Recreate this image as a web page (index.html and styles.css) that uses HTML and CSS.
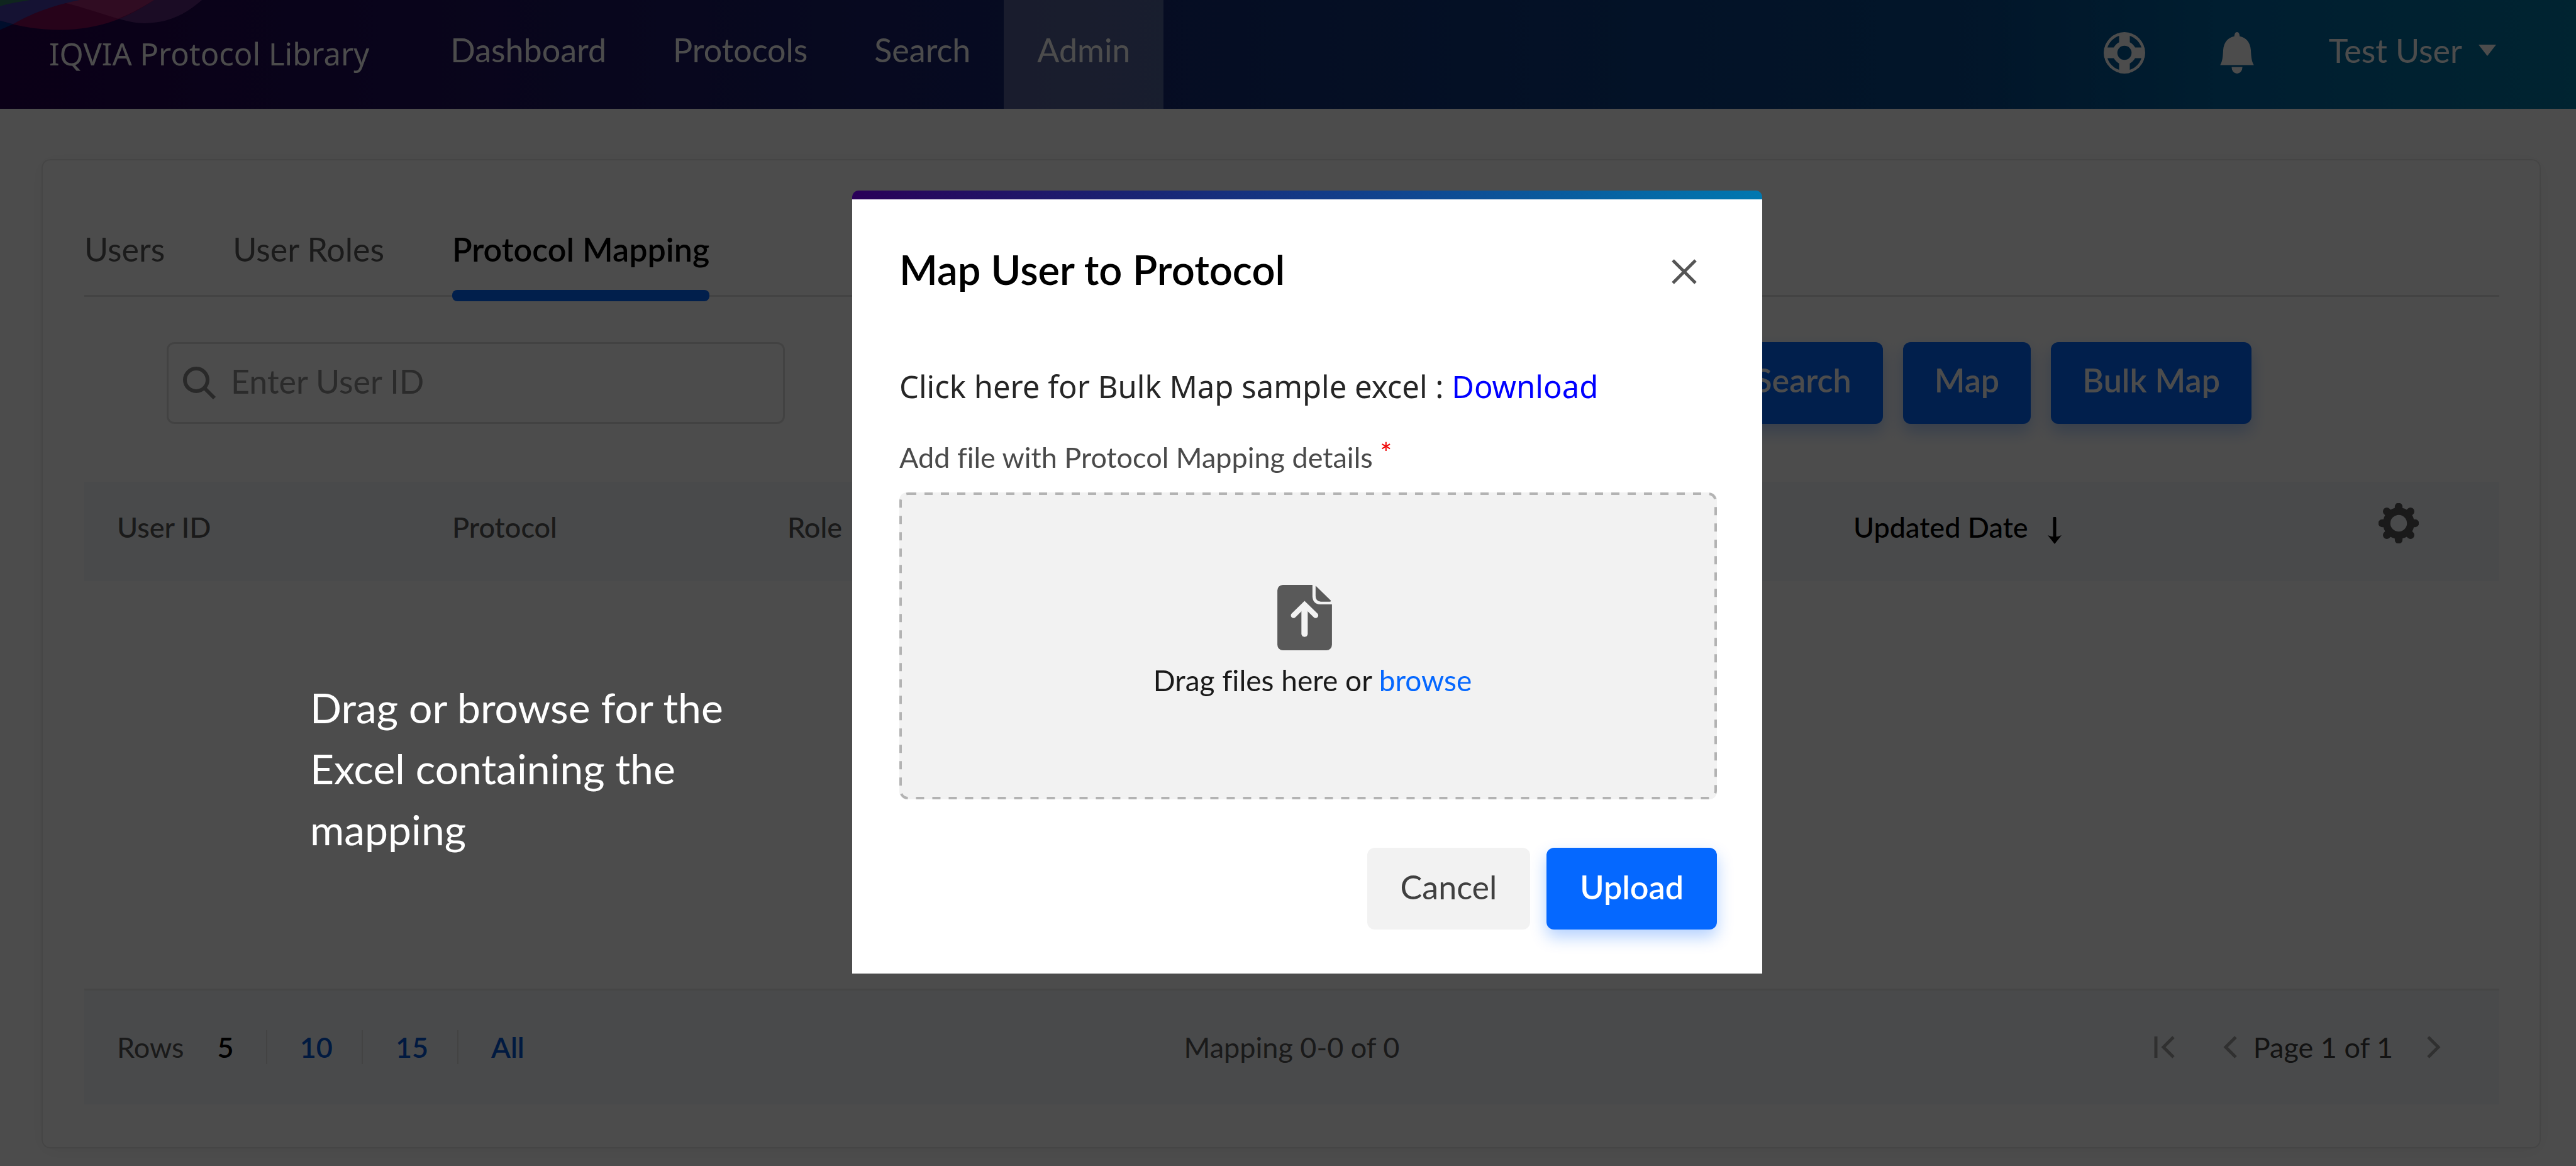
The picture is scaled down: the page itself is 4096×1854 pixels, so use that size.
FILE: index.html
```html
<!DOCTYPE html>
<html lang="en">
<head>
<meta charset="utf-8">
<title>IQVIA Protocol Library</title>
<link rel="stylesheet" href="styles.css">
</head>
<body>
<header class="topbar">
  <svg class="topbar-art" viewBox="0 0 760 160" preserveAspectRatio="none" aria-hidden="true">
    <path fill="#5d2b7e" d="M195 0C290 25 360 62 445 95C490 112 515 118 545 118C640 116 700 70 760 0Z"/>
    <path fill="#820a57" d="M0 0V105C80 138 150 152 225 152C380 150 480 90 580 0Z"/>
    <path fill="#a02872" d="M195 0C290 25 360 62 445 95C500 65 545 30 580 0Z"/>
    <path fill="#002f93" d="M0 0V152L50 122L0 105Z"/>
    <path fill="#463caa" d="M0 0V105L50 122C110 75 190 30 300 0Z"/>
    <path fill="#357e64" d="M0 0V31C40 16 75 8 115 0Z"/>
  </svg>
  <div class="brand">IQVIA Protocol Library</div>
  <nav class="mainnav">
    <a href="#">Dashboard</a>
    <a href="#">Protocols</a>
    <a href="#">Search</a>
    <a href="#" class="active">Admin</a>
  </nav>
  <div class="topbar-tools">
    <button class="icon-btn" aria-label="Help">
      <svg width="66" height="66" viewBox="0 0 70 70">
        <mask id="buoy">
          <circle cx="35" cy="35" r="35" fill="#fff"/>
          <circle cx="35" cy="35" r="25" fill="none" stroke="#000" stroke-width="10"/>
          <path d="M26 0h18v70H26zM0 26h70v18H0z" fill="#fff"/>
          <circle cx="35" cy="35" r="12" fill="#000"/>
        </mask>
        <circle cx="35" cy="35" r="35" fill="#fff" mask="url(#buoy)"/>
      </svg>
    </button>
    <button class="icon-btn" aria-label="Notifications">
      <svg width="54" height="66" viewBox="0 0 56 69">
        <path fill="#fff" d="M28 0C31 0 32 3 32.500 7C43 9 50 17 51 30C51.500 40 52 48 56 55H0C4 48 4.500 40 5 30C6 17 13 9 23.500 7C24 3 25 0 28 0ZM19 58H37A9 11 0 0 1 19 58Z"/>
      </svg>
    </button>
    <button class="user-btn">Test User
      <svg width="28" height="18" viewBox="0 0 28 18"><path d="M0 0H28L14 18Z" fill="#fff"/></svg>
    </button>
  </div>
</header>

<main class="card">
  <nav class="tabs">
    <a href="#">Users</a>
    <a href="#">User Roles</a>
    <a href="#" class="active">Protocol Mapping</a>
  </nav>

  <form class="filters">
    <label class="search-box">
      <svg width="53" height="53" viewBox="0 0 53 53" aria-hidden="true"><circle cx="21" cy="21" r="18" fill="none" stroke="#8a8a8a" stroke-width="6"/><path d="M34 34L50 50" stroke="#8a8a8a" stroke-width="6"/></svg>
      <input type="text" placeholder="Enter User ID" aria-label="Enter User ID">
    </label>
    <div class="filter-actions">
      <button type="button" class="btn primary">Search</button>
      <button type="button" class="btn primary">Map</button>
      <button type="button" class="btn primary">Bulk Map</button>
    </div>
  </form>

  <table class="mapping">
    <colgroup><col class="c-user"><col class="c-protocol"><col class="c-role"><col class="c-date"><col></colgroup>
    <thead>
      <tr>
        <th>User ID</th>
        <th>Protocol</th>
        <th>Role</th>
        <th class="sorted">Updated Date
          <svg width="22" height="43" viewBox="0 0 22 43" aria-hidden="true"><path d="M11 2V32" stroke="#000" stroke-width="5" stroke-linecap="round"/><path d="M0 29Q11 34 22 29L11 43Z"/></svg>
        </th>
        <th class="settings">
          <button class="icon-btn" aria-label="Table settings">
            <svg width="66" height="66" viewBox="0 0 70 70">
              <mask id="hole"><path fill="#fff" d="M0 0H70V70H0Z"/><circle cx="35" cy="35" r="14" fill="#000"/></mask>
              <g mask="url(#hole)" stroke="#575757" stroke-width="13" stroke-linecap="round">
                <circle cx="35" cy="35" r="20" fill="#575757"/>
                <path d="M35 7V63M7 35H63M15 15L55 55M55 15L15 55"/>
              </g>
            </svg>
          </button>
        </th>
      </tr>
    </thead>
  </table>

  <footer class="pager">
    <div class="rows">
      <span>Rows</span>
      <ul>
        <li class="current">5</li>
        <li><a href="#">10</a></li>
        <li><a href="#">15</a></li>
        <li><a href="#">All</a></li>
      </ul>
    </div>
    <div class="summary">Mapping 0-0 of 0</div>
    <div class="pages">
      <button class="icon-btn first" aria-label="First page"><svg width="33" height="36" viewBox="0 0 33 36"><path d="M3 1V35M31 2L15 18L31 34" fill="none" stroke="#a0a0a0" stroke-width="5"/></svg></button>
      <button class="icon-btn prev" aria-label="Previous page"><svg width="22" height="36" viewBox="0 0 22 36"><path d="M20 2L4 18L20 34" fill="none" stroke="#a0a0a0" stroke-width="5"/></svg></button>
      <span>Page 1 of 1</span>
      <button class="icon-btn next" aria-label="Next page"><svg width="22" height="36" viewBox="0 0 22 36"><path d="M2 2L18 18L2 34" fill="none" stroke="#a0a0a0" stroke-width="5"/></svg></button>
    </div>
  </footer>
</main>

<div class="overlay">
  <section class="modal" role="dialog" aria-modal="true" aria-labelledby="modal-title">
    <header class="modal-head">
      <h2 id="modal-title">Map User to Protocol</h2>
      <button class="icon-btn" aria-label="Close"><svg width="40" height="40" viewBox="0 0 40 40"><path d="M2 2L38 38M38 2L2 38" stroke="#555" stroke-width="5"/></svg></button>
    </header>
    <p class="sample">Click here for Bulk Map sample excel : <a href="#">Download</a></p>
    <label class="file-label" for="mapping-file">Add file with Protocol Mapping details <span class="req">*</span></label>
    <div class="dropzone">
      <svg class="dropzone-border" aria-hidden="true"><rect x="2" y="2" rx="12"/></svg>
      <svg class="dropzone-icon" width="87" height="104" viewBox="0 0 277 332" aria-hidden="true">
        <path fill="#595959" d="M28 0H178V58Q180 97 217 99H277V304A28 28 0 0 1 249 332H28A28 28 0 0 1 0 304V28A28 28 0 0 1 28 0Z"/>
        <path fill="#595959" d="M194 5L198 8L270 78Q274 85 266 85H220Q194 83 194 57Z"/>
        <path fill="none" stroke="#f2f2f2" stroke-width="32" stroke-linecap="round" d="M138 110V248"/>
        <path fill="none" stroke="#f2f2f2" stroke-width="27" stroke-linecap="round" d="M82 155L138 100L194 155"/>
      </svg>
      <p>Drag files here or <button class="browse">browse</button></p>
      <input class="file-input" type="file" id="mapping-file">
    </div>
    <footer class="modal-actions">
      <button class="btn plain">Cancel</button>
      <button class="btn primary">Upload</button>
    </footer>
  </section>
</div>
<aside class="callout">Drag or browse for the Excel containing the mapping</aside>
</body>
</html>
```
FILE: styles.css
```css
* { box-sizing: border-box; }

body {
  margin: 0;
  min-height: 100vh;
  display: flex;
  flex-direction: column;
  background: #fff;
  font-family: Lato, "Open Sans", sans-serif;
  font-size: 52px;
  line-height: 60px;
  font-variant-ligatures: none;
  color: #000;
}

a { color: inherit; text-decoration: none; }
svg { display: block; }
button {
  border: 0;
  padding: 0;
  background: none;
  font: inherit;
  color: inherit;
}

/* top bar */
.topbar {
  position: relative;
  flex: none;
  display: flex;
  height: 173px;
  color: #fff;
  background: linear-gradient(90deg, #25004d 0%, #17246f 38%, #074a8c 77%, #0064a0 86%, #0078a3 100%);
}
.topbar-art { position: absolute; left: 0; top: 0; width: 321px; height: 50px; }
.brand {
  padding: 49px 76px 0 78px;
  font-family: "Noto Sans", sans-serif;
  font-size: 49px;
  line-height: 72px;
}
.mainnav { display: flex; }
.mainnav a { padding: 49px 53px 0; }
.mainnav .active { background: rgba(255, 255, 255, .27); }
.topbar-tools {
  margin-left: auto;
  padding-right: 127px;
  display: flex;
  align-items: center;
  gap: 119px;
  height: 167px;
}
.user-btn { display: flex; align-items: center; gap: 26px; margin-top: -8px; }

/* card */
.card {
  flex: 1;
  display: flex;
  flex-direction: column;
  margin: 80px 56px 28px 66px;
  padding: 111px 64px 68px 66px;
  border: 2px solid #e8e8e8;
  border-radius: 14px;
  box-shadow: 0 4px 32px rgba(0, 0, 0, .05);
}
.tabs {
  display: flex;
  gap: 108px;
  padding-bottom: 43px;
  border-bottom: 3px solid #e0e0e0;
  color: #5c5c5c;
}
.tabs .active { position: relative; color: #000; font-weight: 600; }
.tabs .active::after {
  content: "";
  position: absolute;
  left: 0;
  right: 0;
  bottom: -53px;
  height: 18px;
  border-radius: 8px;
  background: #0568ff;
}

.filters {
  display: flex;
  align-items: center;
  justify-content: space-between;
  margin-top: 72px;
  padding: 0 394px 0 131px;
}
.search-box {
  display: flex;
  align-items: center;
  gap: 23px;
  width: 983px;
  height: 130px;
  padding: 0 23px;
  border: 3px solid #dedede;
  border-radius: 12px;
}
.search-box input {
  flex: 1;
  min-width: 0;
  border: 0;
  padding: 0 0 6px;
  outline: 0;
  background: none;
  font: inherit;
}
.search-box input::placeholder { color: #8f8f8f; opacity: 1; }
.filter-actions { display: flex; gap: 32px; }
.btn {
  height: 130px;
  padding: 0 50px 10px;
  border-radius: 12px;
}
.primary {
  background: #0568ff;
  color: #fff;
  font-weight: 600;
  box-shadow: 0 12px 26px rgba(5, 104, 255, .3);
}
.plain { background: #f2f2f2; color: #404040; }

.mapping {
  width: 100%;
  margin-top: 92px;
  table-layout: fixed;
  border-collapse: collapse;
  font-size: 45px;
  line-height: 54px;
}
.mapping tr { background: #f6f8fb; }
.mapping th {
  height: 158px;
  padding: 45px 0 59px 52px;
  text-align: left;
  vertical-align: top;
  font-weight: 500;
  color: #575757;
}
.c-user, .c-protocol { width: 13.88%; }
.c-role { width: 44.14%; }
.c-date { width: 20%; }
.mapping .sorted { color: #000; }
.sorted svg { display: inline-block; margin-left: 20px; vertical-align: -10px; }
.mapping .settings { padding: 33px 127px 0 0; }
.settings .icon-btn { display: block; margin-left: auto; }

.pager {
  display: grid;
  grid-template-columns: 1fr auto 1fr;
  align-items: center;
  height: 184px;
  margin-top: auto;
  padding: 0 52px 2px;
  border-top: 3px solid #eaeaea;
  background: #f6f8fb;
  font-size: 45px;
  line-height: 54px;
  color: #575757;
}
.rows, .rows ul, .pages { display: flex; align-items: center; }
.rows ul { margin: 0; padding: 0; list-style: none; font-weight: 600; }
.rows li { padding: 0 46px 0 52px; border-left: 2px solid #e0e0e0; color: #0558d8; }
.rows .current { padding: 0 51px 0 53px; border-left: 0; color: #000; }
.pages { justify-content: flex-end; padding-right: 41px; }
.pages .first { margin-right: 77px; }
.pages .prev { margin-right: 26px; }
.pages .next { margin-left: 54px; }
.pages span { color: #404040; }

/* dialog */
.overlay {
  position: fixed;
  inset: 0;
  display: flex;
  align-items: center;
  justify-content: center;
  padding: 0 0 3px 61px;
  background: rgba(0, 0, 0, .7);
}
.modal {
  width: 1447px;
  max-width: 90vw;
  padding: 89px 72px 70px 75px;
  border-radius: 10px 10px 0 0;
  background: linear-gradient(90deg, #2a0058, #1a2373 30%, #104590 60%, #0078b0) top / 100% 14px no-repeat #fff;
}
.modal-head { display: flex; align-items: center; justify-content: space-between; padding-right: 32px; }
.modal-head .icon-btn { margin-top: 8px; }
.modal h2 { margin: 0; font-size: 65px; line-height: 72px; font-weight: 600; }
.sample {
  margin: 116px 0 0;
  font-family: "Noto Sans", sans-serif;
  font-size: 49px;
  line-height: 68px;
  color: #262626;
}
.sample a { color: #00f; }
.file-label {
  display: block;
  margin-top: 52px;
  font-size: 45px;
  line-height: 54px;
  color: #4a4a4a;
}
.req { color: #f00000; line-height: 1px; vertical-align: 8px; }
.dropzone {
  position: relative;
  display: flex;
  flex-direction: column;
  align-items: center;
  height: 488px;
  margin-top: 29px;
  padding-top: 147px;
  border-radius: 12px;
  background: #f2f2f2;
}
.dropzone-border { position: absolute; left: 0; top: 0; width: 100%; height: 100%; }
.dropzone-border rect {
  width: calc(100% - 4px);
  height: calc(100% - 4px);
  fill: none;
  stroke: #b3b3b3;
  stroke-width: 4px;
  stroke-dasharray: 13px 13px;
}
.dropzone-icon { margin-right: 12px; }
.dropzone p { margin: 21px 0 0 14px; font-size: 46px; line-height: 54px; color: #1a1a1a; }
.browse { color: #0568ff; }
.file-input { position: absolute; width: 1px; height: 1px; opacity: 0; }
.modal-actions { display: flex; justify-content: flex-end; gap: 26px; margin-top: 77px; }
.modal-actions .btn { padding: 0 53px 6px; }

/* tour note shown over the dimmed page */
.callout {
  position: fixed;
  left: 493px;
  top: 1076px;
  width: 740px;
  font-size: 66px;
  line-height: 97px;
  color: #fff;
}
```
